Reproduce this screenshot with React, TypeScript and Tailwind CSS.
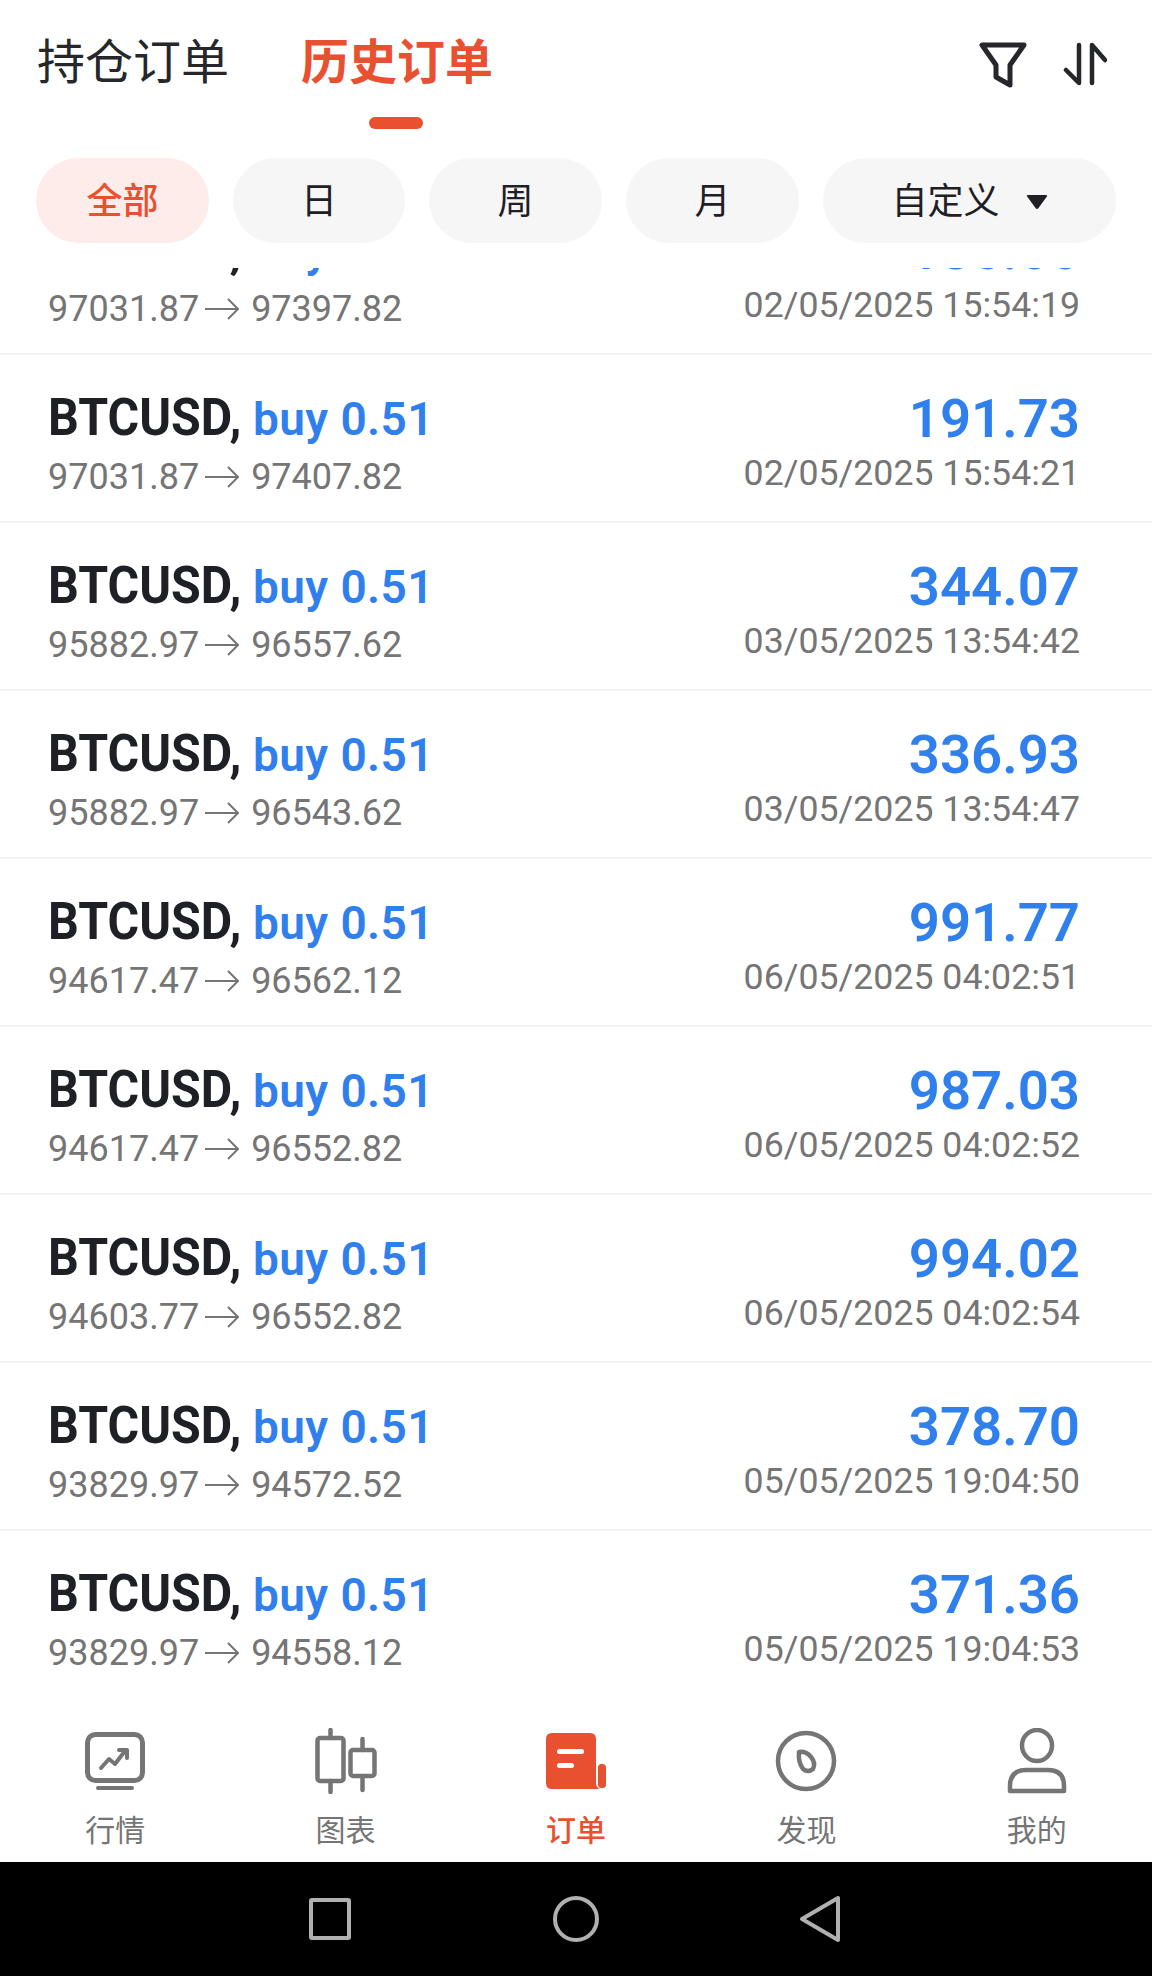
const rows = [
  ["97031.87", "97397.82", "186.66", "02/05/2025 15:54:19"],
  ["97031.87", "97407.82", "191.73", "02/05/2025 15:54:21"],
  ["95882.97", "96557.62", "344.07", "03/05/2025 13:54:42"],
  ["95882.97", "96543.62", "336.93", "03/05/2025 13:54:47"],
  ["94617.47", "96562.12", "991.77", "06/05/2025 04:02:51"],
  ["94617.47", "96552.82", "987.03", "06/05/2025 04:02:52"],
  ["94603.77", "96552.82", "994.02", "06/05/2025 04:02:54"],
  ["93829.97", "94572.52", "378.70", "05/05/2025 19:04:50"],
  ["93829.97", "94558.12", "371.36", "05/05/2025 19:04:53"],
];

function Row({ r, last }: { r: string[]; last: boolean }) {
  return (
    <div className={`h-[168px] shrink-0 flex justify-between pl-[48px] pr-[72px] ${last ? "" : "border-b-[2px] border-[#f3f3f4]"}`}>
      <div className="flex flex-col pt-[33px]">
        <div className="flex items-baseline h-[60px] leading-[60px] whitespace-nowrap">
          <span className="inline-block w-[191px] origin-left scale-x-[0.93] text-[52px] font-bold text-[#1f2026]">BTCUSD,</span>
          <span className="ml-[14px] text-[46px] font-semibold text-[#2f80ed] tracking-[0.4px]">buy 0.51</span>
        </div>
        <div className="flex items-center h-[42px] mt-[8px] text-[36px] leading-[42px] text-[#757575] whitespace-nowrap">
          <span>{r[0]}</span>
          <svg className="ml-[5px] mr-[11px]" width="36" height="26" viewBox="0 0 36 26" fill="none" stroke="#757575" strokeWidth="2">
            <path d="M1 13H34M24 3l10 10-10 10" />
          </svg>
          <span>{r[1]}</span>
        </div>
      </div>
      <div className="flex flex-col items-end pt-[33px]">
        <div className="h-[60px] leading-[60px] text-[54.5px] font-semibold text-[#2f80ed]">{r[2]}</div>
        <div className="h-[42px] mt-[4px] leading-[42px] text-[35.7px] text-[#757575] whitespace-nowrap">{r[3]}</div>
      </div>
    </div>
  );
}

function Chip({ label, active, w }: { label: string; active?: boolean; w: string }) {
  return (
    <div className={`${w} h-[85px] pt-[2px] rounded-[43px] flex items-center justify-center text-[36px] ${active ? "bg-[#fdece9] text-[#e9502f] font-medium" : "bg-[#f6f6f7] text-[#1f2026]"}`}>
      {label}
    </div>
  );
}

function NavItem({ label, active, children }: { label: string; active?: boolean; children: React.ReactNode }) {
  return (
    <div className="flex flex-col items-center">
      <div className="h-[70px] w-[70px] flex items-center justify-center">{children}</div>
      <div className={`mt-[18px] text-[30px] leading-[34px] ${active ? "text-[#e9502f] font-medium" : "text-[#757575]"}`}>{label}</div>
    </div>
  );
}

export default function App() {
  return (
    <div
      className="w-[1152px] h-[1976px] bg-white flex flex-col overflow-hidden"
      style={{ fontFamily: 'Roboto, "Noto Sans CJK SC", sans-serif' }}
    >
      <div className="relative z-10 bg-white h-[268px] shrink-0">
        <div className="h-[158px] flex justify-between pl-[37px] pr-[45px]">
          <div className="flex items-start">
            <div className="mt-[35px] text-[48px] leading-[56px] text-[#26272b] whitespace-nowrap">持仓订单</div>
            <div className="relative ml-[72px] mt-[35px] text-[48px] leading-[56px] font-bold text-[#e9502f] whitespace-nowrap">
              历史订单
              <div className="absolute left-[68px] top-[82px] w-[54px] h-[12px] rounded-full bg-[#e9502f]" />
            </div>
          </div>
          <div className="flex items-start gap-[36px] pt-[42px]">
            <svg width="48" height="46" viewBox="0 0 48 46" fill="none" stroke="#26272b" strokeWidth="5" strokeLinejoin="round" strokeLinecap="round">
              <path d="M3 3H45L31 23V43L17 35V23Z" />
            </svg>
            <svg width="44" height="44" viewBox="0 0 44 44" fill="none" stroke="#26272b" strokeWidth="4.5" strokeLinejoin="round" strokeLinecap="round">
              <path d="M16 3V41L3 28" />
              <path d="M29 41V3L42 18" />
            </svg>
          </div>
        </div>
        <div className="flex gap-[24px] pl-[36px]">
          <Chip label="全部" active w="w-[173px]" />
          <Chip label="日" w="w-[172px]" />
          <Chip label="周" w="w-[173px]" />
          <Chip label="月" w="w-[173px]" />
          <div className="w-[293px] h-[85px] pt-[2px] rounded-[43px] bg-[#f6f6f7] flex items-center justify-center text-[36px] text-[#1f2026]">
            <span>自定义</span>
            <svg className="ml-[26px]" width="22" height="16" viewBox="0 0 22 16" fill="#1f2026">
              <path d="M2 1H20Q22 1 20.5 3L12.5 14Q11 16 9.5 14L1.5 3Q0 1 2 1Z" />
            </svg>
          </div>
        </div>
      </div>

      <div className="h-[1430px] shrink-0 bg-white">
        <div className="mt-[-81px] flex flex-col">
          {rows.map((r, i) => (
            <Row key={i} r={r} last={i === rows.length - 1} />
          ))}
        </div>
      </div>

      <div className="relative z-10 bg-white h-[164px] shrink-0 grid grid-cols-5 pt-[28px]">
        <NavItem label="行情">
          <svg width="60" height="58" viewBox="0 0 60 58" fill="none" stroke="#757575" strokeLinecap="round" strokeLinejoin="round">
            <rect x="2.5" y="2.5" width="55" height="46" rx="8" strokeWidth="5" />
            <path d="M16 36L24 27L30 32L40 19" strokeWidth="4" />
            <path d="M34 18H42V26" strokeWidth="4" />
            <path d="M13 56H47" strokeWidth="4" />
          </svg>
        </NavItem>
        <NavItem label="图表">
          <svg width="62" height="66" viewBox="0 0 62 66" fill="none" stroke="#757575" strokeWidth="4.5" strokeLinecap="round" strokeLinejoin="round">
            <rect x="2.5" y="10" width="26" height="43" rx="2.5" />
            <path d="M15.5 2V10M15.5 53V64" />
            <rect x="35.5" y="22" width="24" height="26" rx="2.5" />
            <path d="M47.5 11V22M47.5 48V62" />
          </svg>
        </NavItem>
        <NavItem label="订单" active>
          <svg width="60" height="56" viewBox="0 0 60 56" fill="none">
            <path d="M6 0H44Q50 0 50 6V50Q50 54 54 56H6Q0 56 0 50V6Q0 0 6 0Z" fill="#e9502f" />
            <rect x="11" y="16" width="27" height="5" rx="2.5" fill="white" />
            <rect x="11" y="30" width="17" height="5" rx="2.5" fill="white" />
            <rect x="52" y="31" width="8" height="24" rx="3.5" fill="#e9502f" />
          </svg>
        </NavItem>
        <NavItem label="发现">
          <svg width="62" height="62" viewBox="0 0 62 62" fill="none" stroke="#757575" strokeWidth="4.5" strokeLinejoin="round">
            <circle cx="31" cy="31" r="28" />
            <path d="M24 22Q31 21 36 27Q41 33 38 39Q33 43 28 39Q23 32 24 22Z" />
          </svg>
        </NavItem>
        <NavItem label="我的">
          <svg width="60" height="66" viewBox="0 0 60 66" fill="none" stroke="#757575" strokeWidth="4.5" strokeLinejoin="round">
            <ellipse cx="30" cy="17.5" rx="15" ry="15.5" />
            <path d="M3 63V58Q3 42 19 42H41Q57 42 57 58V63Z" />
          </svg>
        </NavItem>
      </div>

      <div className="flex-1 bg-black flex items-center pl-[309px]">
        <div className="w-[42px] h-[42px] border-[4px] border-[#b0b0b0] rounded-[3px]" />
        <div className="ml-[202px] w-[46px] h-[46px] border-[4px] border-[#b0b0b0] rounded-full" />
        <svg className="ml-[200px]" width="42" height="48" viewBox="0 0 42 48" fill="none" stroke="#b0b0b0" strokeWidth="4" strokeLinejoin="round">
          <path d="M3 24L39 3V45Z" />
        </svg>
      </div>
    </div>
  );
}
